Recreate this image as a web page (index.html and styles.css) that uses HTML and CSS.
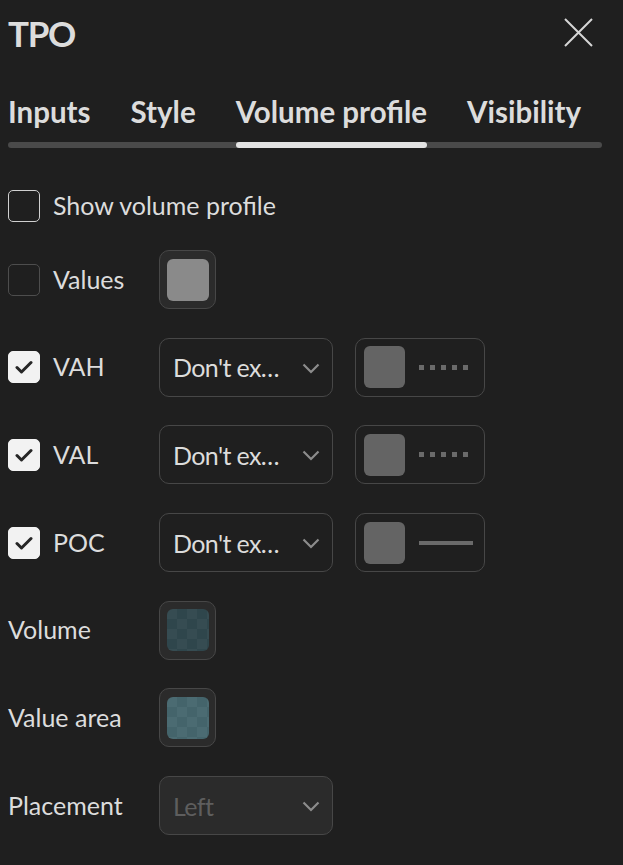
FILE: index.html
```html
<!DOCTYPE html>
<html lang="en">
<head>
<meta charset="utf-8">
<title>TPO</title>
<link rel="stylesheet" href="styles.css">
</head>
<body>
<div class="dialog">
  <header class="head">
    <h1 class="title">TPO</h1>
    <button class="close" aria-label="Close">
      <svg width="29" height="29" viewBox="0 0 29 29"><path d="M1 1L28 28M28 1L1 28" stroke="#d6d6d6" stroke-width="2" fill="none"/></svg>
    </button>
  </header>

  <nav class="tabs">
    <span class="tab">Inputs</span>
    <span class="tab">Style</span>
    <span class="tab active">Volume profile</span>
    <span class="tab">Visibility</span>
  </nav>

  <div class="rows">
    <div class="row first">
      <label class="check-label"><span class="cb focus"></span><span>Show volume profile</span></label>
    </div>

    <div class="row">
      <label class="check-label"><span class="cb"></span><span>Values</span></label>
      <button class="swatch-btn"><span class="swatch gray"></span></button>
    </div>

    <div class="row">
      <label class="check-label"><span class="cb on"><svg width="18" height="14" viewBox="0 0 18 14"><path d="M2 7.5L6.5 12L16 2.5" stroke="#262626" stroke-width="3" fill="none" stroke-linecap="round" stroke-linejoin="round"/></svg></span><span>VAH</span></label>
      <div class="select"><span>Don't ex…</span><svg class="chev" width="18" height="11" viewBox="0 0 18 11"><path d="M1.5 1.5L9 9L16.5 1.5" stroke="#8c8c8c" stroke-width="2.2" fill="none"/></svg></div>
      <button class="line-btn"><span class="swatch dark"></span><span class="dots"><i></i><i></i><i></i><i></i><i></i></span></button>
    </div>

    <div class="row">
      <label class="check-label"><span class="cb on"><svg width="18" height="14" viewBox="0 0 18 14"><path d="M2 7.5L6.5 12L16 2.5" stroke="#262626" stroke-width="3" fill="none" stroke-linecap="round" stroke-linejoin="round"/></svg></span><span>VAL</span></label>
      <div class="select"><span>Don't ex…</span><svg class="chev" width="18" height="11" viewBox="0 0 18 11"><path d="M1.5 1.5L9 9L16.5 1.5" stroke="#8c8c8c" stroke-width="2.2" fill="none"/></svg></div>
      <button class="line-btn"><span class="swatch dark"></span><span class="dots"><i></i><i></i><i></i><i></i><i></i></span></button>
    </div>

    <div class="row">
      <label class="check-label"><span class="cb on"><svg width="18" height="14" viewBox="0 0 18 14"><path d="M2 7.5L6.5 12L16 2.5" stroke="#262626" stroke-width="3" fill="none" stroke-linecap="round" stroke-linejoin="round"/></svg></span><span>POC</span></label>
      <div class="select"><span>Don't ex…</span><svg class="chev" width="18" height="11" viewBox="0 0 18 11"><path d="M1.5 1.5L9 9L16.5 1.5" stroke="#8c8c8c" stroke-width="2.2" fill="none"/></svg></div>
      <button class="line-btn"><span class="swatch dark"></span><span class="solid"></span></button>
    </div>

    <div class="row">
      <span class="label">Volume</span>
      <button class="swatch-btn"><span class="swatch teal-dark"></span></button>
    </div>

    <div class="row">
      <span class="label">Value area</span>
      <button class="swatch-btn"><span class="swatch teal"></span></button>
    </div>

    <div class="row">
      <span class="label">Placement</span>
      <div class="select disabled"><span>Left</span><svg class="chev" width="18" height="11" viewBox="0 0 18 11"><path d="M1.5 1.5L9 9L16.5 1.5" stroke="#8c8c8c" stroke-width="2.2" fill="none"/></svg></div>
    </div>
  </div>
</div>
</body>
</html>
```
FILE: styles.css
```css
* { box-sizing: border-box; }

html, body {
  margin: 0;
  background: #1f1f1f;
}

body {
  font-family: Lato, "Noto Sans", sans-serif;
  color: #dcdcdc;
}

.dialog {
  width: 623px;
  height: 865px;
  padding: 0 21px 0 8px;
}

.head {
  height: 65px;
  display: flex;
  align-items: center;
  justify-content: space-between;
}

.title {
  margin: 0;
  font-size: 35px;
  font-weight: 700;
  letter-spacing: -1.3px;
  line-height: 42px;
  color: #dcdcdc;
}

.close {
  border: 0;
  background: none;
  padding: 0;
  margin-right: 9px;
  width: 29px;
  height: 29px;
  display: flex;
}

.tabs {
  position: relative;
  margin-top: 29px;
  display: flex;
  gap: 40px;
  padding-bottom: 19px;
}

.tabs::before {
  content: "";
  position: absolute;
  left: 0;
  right: 0;
  bottom: 0;
  height: 6px;
  border-radius: 3px;
  background: #4a4a4a;
}

.tab {
  position: relative;
  font-size: 29.5px;
  font-weight: 700;
  line-height: 35px;
  color: #dcdcdc;
  white-space: nowrap;
}

.tab.active::after {
  content: "";
  position: absolute;
  left: 0;
  right: 0;
  bottom: -19px;
  height: 6px;
  border-radius: 3px;
  background: #e3e3e3;
}

.rows {
  margin-top: 42px;
  display: flex;
  flex-direction: column;
  gap: 28.7px;
}

.row {
  height: 59px;
  display: grid;
  grid-template-columns: 129px auto auto;
  justify-content: start;
  align-items: center;
  column-gap: 22px;
  font-size: 25px;
  line-height: 30px;
}

.row.first {
  height: 32px;
  margin-bottom: -0.7px;
}

.check-label {
  display: flex;
  align-items: center;
  gap: 13px;
  white-space: nowrap;
}

.check-label span:last-child,
.label {
  position: relative;
  top: -1px;
}

.cb {
  width: 32px;
  height: 32px;
  border-radius: 5px;
  border: 1px solid #4d4d4d;
  display: flex;
  align-items: center;
  justify-content: center;
  flex: none;
}

.cb.focus {
  border-color: #d0d0d0;
}

.cb.on {
  background: #f2f2f2;
  border-color: #f2f2f2;
}

.label {
  white-space: nowrap;
}

.swatch-btn {
  width: 57px;
  height: 59px;
  padding: 0;
  border: 1px solid #474747;
  border-radius: 10px;
  background: #2b2b2b;
  display: flex;
  align-items: center;
  justify-content: center;
}

.swatch {
  width: 42px;
  height: 42px;
  border-radius: 6px;
  display: block;
  flex: none;
}

.swatch.gray { background: #8a8a8a; }
.swatch.dark { background: #646464; width: 41px; }

.swatch.teal-dark {
  background: repeating-conic-gradient(#2f464c 0 25%, #364c52 0 50%) 0 0 / 20px 20px;
}

.swatch.teal {
  background: repeating-conic-gradient(#44646b 0 25%, #4b6b72 0 50%) 0 0 / 20px 20px;
}

.select {
  width: 174px;
  height: 59px;
  border: 1px solid #474747;
  border-radius: 10px;
  display: flex;
  align-items: center;
  justify-content: space-between;
  padding: 0 12px 0 13px;
  color: #dcdcdc;
  white-space: nowrap;
  letter-spacing: -0.6px;
}

.select .chev {
  margin-top: 2px;
}

.select.disabled {
  background: #2b2b2b;
  color: #5e5e5e;
}

.line-btn {
  width: 130px;
  height: 59px;
  padding: 0 0 0 8px;
  border: 1px solid #474747;
  border-radius: 10px;
  background: none;
  display: flex;
  align-items: center;
  gap: 14px;
}

.dots {
  display: flex;
  gap: 6px;
}

.dots i {
  width: 5px;
  height: 5px;
  background: #6a6a6a;
  display: block;
}

.solid {
  width: 54px;
  height: 4px;
  background: #6a6a6a;
  display: block;
}
```
